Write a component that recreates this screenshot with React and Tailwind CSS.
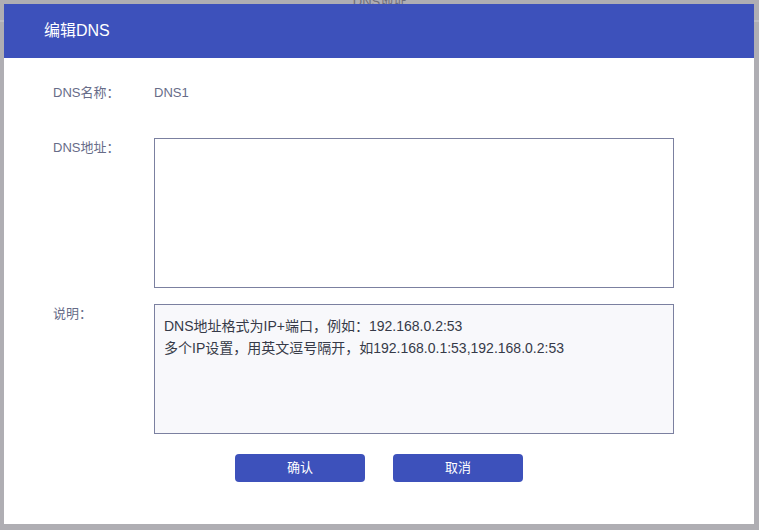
export default function App() {
  const font = { fontFamily: '"Liberation Sans", "Noto Sans CJK SC", sans-serif' };
  return (
    <div
      className="relative w-[759px] h-[530px] overflow-hidden bg-[#afaeb3]"
      style={font}
    >
      {/* page behind the overlay */}
      <div className="h-[20px] flex justify-center items-end">
        <span className="text-[13px] leading-[16px] text-[#6f6f78] -translate-y-[10px]">DNS地址</span>
      </div>
      <div className="h-[2px] bg-[#bdbcc1]" />

      <div className="absolute left-[4px] top-[4px] w-[750px] h-[520px] bg-white flex flex-col">
        <div className="h-[54px] bg-[#3d51bb] flex items-center pl-[40px]">
          <h2 className="text-[16px] text-white">编辑DNS</h2>
        </div>

        <div className="flex flex-col pt-[25px] text-[13px]">
          <div className="flex items-center h-[20px]">
            <span className="w-[101px] pl-[49px] box-content text-[#676c88] whitespace-nowrap">DNS名称：</span>
            <span className="text-[#676c88]">DNS1</span>
          </div>

          <div className="flex mt-[35px]">
            <span className="w-[101px] pl-[49px] box-content text-[#676c88] leading-[20px] whitespace-nowrap">DNS地址：</span>
            <textarea className="w-[520px] h-[150px] border border-[#7b80a0] outline-none resize-none bg-white" />
          </div>

          <div className="flex mt-[16px]">
            <span className="w-[101px] pl-[49px] box-content text-[#676c88] leading-[20px] whitespace-nowrap">说明：</span>
            <div className="w-[520px] h-[130px] border border-[#7b80a0] bg-[#f8f8fb] pt-[10px] pl-[9px] text-[14px] text-[#363a48] leading-[22px]">
              <p>DNS地址格式为IP+端口，例如：192.168.0.2:53</p>
              <p>多个IP设置，用英文逗号隔开，如192.168.0.1:53,192.168.0.2:53</p>
            </div>
          </div>

          <div className="flex justify-center gap-[28px] mt-[20px]">
            <button className="w-[130px] h-[28px] rounded-[4px] bg-[#3d51bb] text-white text-[13px]">确认</button>
            <button className="w-[130px] h-[28px] rounded-[4px] bg-[#3d51bb] text-white text-[13px]">取消</button>
          </div>
        </div>
      </div>
    </div>
  );
}
